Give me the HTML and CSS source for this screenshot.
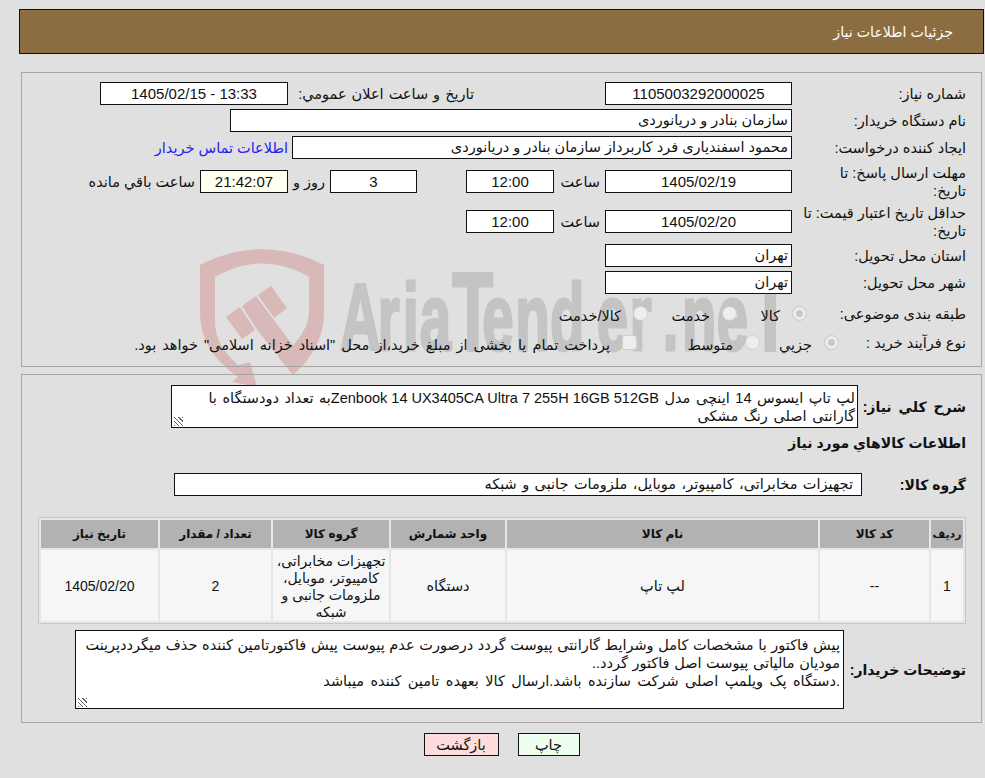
FILE: index.html
```html
<!DOCTYPE html>
<html lang="fa" dir="rtl">
<head>
  <meta charset="UTF-8">
  <title>جزئیات اطلاعات نیاز</title>
  <link rel="stylesheet" href="styles.css">
</head>
<body>

  <!-- watermark lies behind the form -->
  <svg class="watermark" viewBox="190 240 620 160" aria-hidden="true">
    <g class="wm-mark">
      <path d="M200 265C240 244 284 244 324 265V312C324 340 310 360 293 375L279 358C296 344 309 330 309 310V277C278 259 246 259 215 277V320C215 340 224 352 238 365L250 362L257 387L232 382L238 377C214 360 200 340 200 312Z"/>
      <path d="M226 317L240 307L255 330L242 339Z"/>
      <path d="M242 306L256 296L276 323L298 352L293 375L258 331Z"/>
      <path d="M258 295L271 286L287 308L274 318Z"/>
    </g>
    <text class="wm-word" transform="translate(340 350) scale(.6 1)" x="0 63 105 133 187 237 292 350 428 483 538 570 628 683">Aria<tspan class="wm-cap">T</tspan>ender.ne<tspan class="wm-cap">T</tspan></text>
  </svg>

  <header class="page-title">جزئیات اطلاعات نیاز</header>

  <main class="panel form-panel">
    <div class="row row-top">
      <label class="lbl">شماره نیاز:</label>
      <span class="box box-date num">1105003292000025</span>
      <label class="lbl-public">تاریخ و ساعت اعلان عمومي:</label>
      <span class="box box-public num" dir="ltr">1405/02/15 - 13:33</span>
    </div>
    <div class="row">
      <label class="lbl">نام دستگاه خریدار:</label>
      <span class="box box-wide">سازمان بنادر و دریانوردی</span>
    </div>
    <div class="row">
      <label class="lbl">ایجاد کننده درخواست:</label>
      <span class="box box-creator">محمود اسفندیاری فرد کاربرداز سازمان بنادر و دریانوردی</span>
      <a class="contact" href="#">اطلاعات تماس خریدار</a>
    </div>
    <div class="row row-tall">
      <label class="lbl">مهلت ارسال پاسخ: تا<br>تاریخ:</label>
      <span class="box box-date num">1405/02/19</span>
      <span class="word">ساعت</span>
      <span class="box box-time num">12:00</span>
      <span class="box box-days num">3</span>
      <span class="word word-days">روز و</span>
      <span class="box box-remain num">21:42:07</span>
      <span class="word word-remain">ساعت باقي مانده</span>
    </div>
    <div class="row row-tall row-price">
      <label class="lbl">حداقل تاریخ اعتبار قیمت: تا<br>تاریخ:</label>
      <span class="box box-date num">1405/02/20</span>
      <span class="word">ساعت</span>
      <span class="box box-time num">12:00</span>
    </div>
    <div class="row">
      <label class="lbl">استان محل تحویل:</label>
      <span class="box box-date">تهران</span>
    </div>
    <div class="row row-city">
      <label class="lbl">شهر محل تحویل:</label>
      <span class="box box-date">تهران</span>
    </div>
    <div class="row row-radio">
      <label class="lbl lbl-subject">طبقه بندی موضوعی:</label>
      <span class="radio on"></span><span class="opt opt-goods">کالا</span>
      <span class="radio"></span><span class="opt opt-service">خدمت</span>
      <span class="radio"></span><span class="opt">کالا/خدمت</span>
    </div>
    <div class="row row-radio">
      <label class="lbl lbl-process">نوع فرآیند خرید :</label>
      <span class="radio on"></span><span class="opt opt-small">جزيي</span>
      <span class="radio"></span><span class="opt opt-medium">متوسط</span>
      <span class="check"></span><span class="opt opt-treasury">پرداخت تمام یا بخشی از مبلغ خرید،از محل "اسناد خزانه اسلامی" خواهد بود.</span>
    </div>
  </main>

  <section class="panel items-panel">
    <div class="row-desc">
      <label class="lbl-b lbl-desc">شرح کلي نیاز:</label>
      <div class="box-area box-desc">لپ تاپ ایسوس 14 اینچی مدل <span class="latin">Zenbook 14 UX3405CA Ultra 7 255H 16GB 512GB</span>به تعداد دودستگاه با<br>گارانتی اصلی رنگ مشکی<i class="grip"></i></div>
    </div>
    <h2 class="items-title">اطلاعات کالاهاي مورد نیاز</h2>
    <div class="row-group">
      <label class="lbl-b lbl-group">گروه کالا:</label>
      <span class="box box-group">تجهیزات مخابراتی، کامپیوتر، موبایل، ملزومات جانبی و شبکه</span>
    </div>

    <table class="items">
      <thead>
        <tr>
          <th class="c-row">ردیف</th>
          <th class="c-code">کد کالا</th>
          <th class="c-name">نام کالا</th>
          <th class="c-unit">واحد شمارش</th>
          <th class="c-group">گروه کالا</th>
          <th class="c-qty">تعداد / مقدار</th>
          <th class="c-date">تاریخ نیاز</th>
        </tr>
      </thead>
      <tbody>
        <tr>
          <td class="td-num">1</td>
          <td class="td-num">--</td>
          <td>لپ تاپ</td>
          <td>دستگاه</td>
          <td class="td-group">تجهیزات مخابراتی، کامپیوتر، موبایل، ملزومات جانبی و شبکه</td>
          <td class="td-num">2</td>
          <td class="td-num">1405/02/20</td>
        </tr>
      </tbody>
    </table>

    <div class="row-notes">
      <label class="lbl-b lbl-notes">توضیحات خریدار:</label>
      <div class="box-area box-notes">پیش فاکتور با مشخصات کامل وشرایط گارانتی پیوست گردد درصورت عدم پیوست پیش فاکتورتامین کننده حذف میگرددپرینت مودیان مالیاتی پیوست اصل فاکتور گردد..<br><span class="notes-last">.دستگاه پک ویلمپ اصلی شرکت سازنده باشد.ارسال کالا بعهده تامین کننده میباشد</span><i class="grip"></i></div>
    </div>
  </section>

  <footer class="actions">
    <button class="btn btn-print">چاپ</button>
    <button class="btn btn-back">بازگشت</button>
  </footer>

</body>
</html>
```

FILE: styles.css
```css
/* === Reset === */
*, *::before, *::after { box-sizing: border-box; }
body {
  background: #e0e0e0;
  color: #111;
  font-family: "Liberation Sans", "DejaVu Sans", sans-serif;
  font-size: 14.5px;
  height: 778px;
  margin: 0;
  overflow: hidden;
  padding: 9px 1px 0 19px;
  position: relative;
}

/* === Title bar === */
.page-title {
  align-items: center;
  background: #8c6d42;
  border: 1px solid #111;
  color: #fff;
  display: flex;
  font-size: 14.2px;
  height: 45px;
  padding-right: 30px;
  position: relative;
}

/* === Panels === */
.panel {
  border: 1px solid #a5a5a5;
  margin: 0 2px;
  position: relative;
}
.form-panel {
  height: 295px;
  margin-top: 18px;
  padding-top: 9px;
}
.items-panel {
  height: 349px;
  margin-top: 7px;
  padding-top: 10px;
}

/* === Form rows === */
.row {
  align-items: center;
  display: flex;
  height: 23px;
  margin-bottom: 4px;
  white-space: nowrap;
}
.row-tall { height: 37px; margin-bottom: 3px; }
.row-price { margin-bottom: 4px; }
.row-city { margin-bottom: 8px; }
.row-radio { margin-bottom: 6px; }
.lbl {
  flex: none;
  line-height: 18px;
  padding-right: 15px;
  width: 189px;
}
.lbl-subject { width: 174px; }
.lbl-process { width: 142px; }
.lbl-public {
  flex: none;
  margin-right: 131px;
  padding-left: 4px;
  width: 186px;
  word-spacing: 1px;
}
.box {
  background: #fff;
  border: 1px solid #111;
  display: block;
  flex: none;
  height: 23px;
  line-height: 21px;
  padding: 0 3px;
}
.num { font-size: 15px; text-align: center; }
.box-date { width: 187px; }
.box-public { width: 188px; }
.box-wide { width: 562px; }
.box-creator { width: 500px; }
.box-time { width: 88px; }
.box-days { margin-right: 49px; width: 87px; }
.box-remain { background: #fffff0; width: 88px; }
.word { padding-right: 5px; width: 51px; }
.word-days { padding-right: 5px; width: 42px; }
.word-remain { width: auto; }
.contact {
  color: #2222ee;
  margin-right: 4px;
  text-decoration: none;
}

/* === Radios === */
.radio, .check {
  background: #eee;
  border: 1px solid #cfcfcf;
  border-radius: 50%;
  flex: none;
  height: 15px;
  width: 15px;
}
.check { border-radius: 3px; }
.radio.on { background: #c8c8c8; box-shadow: inset 0 0 0 3px #eee; }
.opt { flex: none; padding: 5px 12px 0 0; }
.opt-goods { width: 55px; }
.opt-service { width: 74px; }
.opt-small { width: 64px; }
.opt-medium { width: 108px; }
.opt-treasury { word-spacing: 2px; }

/* === Description and notes === */
.row-desc, .row-group, .row-notes {
  align-items: center;
  display: flex;
}
.lbl-b {
  flex: none;
  font-size: 14px;
  font-weight: bold;
  padding-right: 15px;
  white-space: nowrap;
}
.lbl-desc { width: 123px; word-spacing: 3px; }
.lbl-group { width: 119px; }
.lbl-notes { width: 137px; }
.box-area {
  background: #fff;
  border: 1px solid #111;
  flex: none;
  line-height: 18px;
  padding: 3px 2px 0;
  position: relative;
}
.box-desc { height: 43px; width: 687px; word-spacing: 1.5px; }
.latin { word-spacing: 0; }
.box-notes { height: 79px; padding: 5px 3px 0; width: 769px; word-spacing: .6px; }
.notes-last { word-spacing: 2.4px; }
.grip {
  background: repeating-linear-gradient(45deg, #666 0 1px, transparent 1px 3px);
  bottom: 1px;
  height: 9px;
  left: 2px;
  position: absolute;
  width: 9px;
}
.items-title {
  font-size: 14px;
  font-weight: bold;
  height: 45px;
  line-height: 30px;
  margin: 0;
  padding-right: 15px;
}
.box-group { padding-right: 8px; width: 688px; word-spacing: 1.4px; }

/* === Items table === */
.items {
  background: #e6e6e6;
  border: 1px solid #c8c8c8;
  border-collapse: separate;
  border-spacing: 2px;
  margin: 21px 15px 6px 0;
  table-layout: fixed;
  width: 928px;
}
.items th {
  background: #b2b2b2;
  font-size: 12px;
  height: 28px;
  padding: 0;
}
.items th.c-row { font-size: 11px; }
.items td {
  background: #f6f6f6;
  height: 71px;
  line-height: 17px;
  padding: 2px 2px 0;
  text-align: center;
}
.items .td-num { font-size: 14px; }
.items .td-group { font-size: 14px; }
.c-row { width: 32px; }
.c-code { width: 109px; }
.c-name { width: 311px; }
.c-unit { width: 114px; }
.c-group { width: 116px; }
.c-qty { width: 111px; }
.c-date { width: 117px; }

/* === Footer buttons === */
.actions {
  display: flex;
  gap: 19px;
  justify-content: center;
  margin-top: 10px;
  position: relative;
}
.btn {
  border: 1px solid #111;
  color: #111;
  font: inherit;
  height: 23px;
  padding: 0;
}
.btn-print { background: #efffef; width: 62px; }
.btn-back { background: #ffdcdc; width: 75px; }

/* === Watermark === */
.watermark {
  direction: ltr;
  height: 160px;
  left: 190px;
  position: absolute;
  top: 240px;
  width: 620px;
}
.wm-mark { fill: #d9b8b8; }
.wm-word {
  fill: #c4c4c4;
  font-family: "Liberation Sans", sans-serif;
  font-size: 94px;
  font-weight: bold;
  stroke: #c4c4c4;
  stroke-width: 3px;
}
.wm-cap { font-size: 112px; }
```
